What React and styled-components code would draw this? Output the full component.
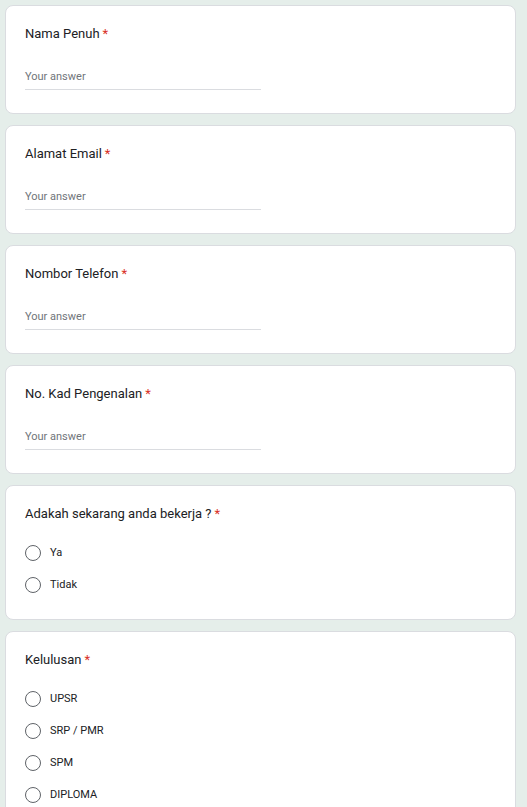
import React from 'react';
import styled, { createGlobalStyle } from 'styled-components';

const GlobalStyle = createGlobalStyle`
    html, body {
        margin: 0;
        padding: 0;
        background: #e5eeea;
        font-family: Roboto, "Liberation Sans", Arial, sans-serif;
        color: #202124;
    }
`;

const Page = styled.div`
    display: flex;
    flex-direction: column;
    gap: 11px;
    padding: 5px 11px 20px 5px;
`;

const Card = styled.div`
    background: #fff;
    border: 1px solid #dadce0;
    border-radius: 8px;
    padding: 19px 19px ${props => (props.choice ? '18px' : '23px')};
    display: flex;
    flex-direction: column;
`;

const Question = styled.div`
    font-size: 13px;
    line-height: 18px;
    color: #202124;
`;

const Required = styled.span`
    color: #d93025;
    margin-left: 3px;
`;

const AnswerField = styled.div`
    width: 50%;
    margin-top: 26px;
    padding-bottom: 4px;
    border-bottom: 1px solid #dadce0;
    font-size: 11px;
    line-height: 16px;
    color: #70757a;
`;

const Options = styled.div`
    margin-top: 14px;
    display: flex;
    flex-direction: column;
`;

const OptionRow = styled.label`
    display: flex;
    align-items: center;
    height: 32px;
    gap: 9px;
    cursor: pointer;
`;

const Radio = styled.span`
    width: 16px;
    height: 16px;
    box-sizing: border-box;
    border: 1.5px solid #5f6368;
    border-radius: 50%;
    flex-shrink: 0;
`;

const OptionLabel = styled.span`
    font-size: 11px;
    line-height: 16px;
    color: #202124;
`;

const textQuestions = ['Nama Penuh', 'Alamat Email', 'Nombor Telefon', 'No. Kad Pengenalan'];

const choiceQuestions = [
    { title: 'Adakah sekarang anda bekerja ?', options: ['Ya', 'Tidak'] },
    { title: 'Kelulusan', options: ['UPSR', 'SRP / PMR', 'SPM', 'DIPLOMA', 'IJAZAH', 'Lain-lain'] },
];

const App = () => {
    return (
        <>
            <GlobalStyle />
            <Page>
                {textQuestions.map(q => (
                    <Card key={q}>
                        <Question>{q}<Required>*</Required></Question>
                        <AnswerField>Your answer</AnswerField>
                    </Card>
                ))}
                {choiceQuestions.map(q => (
                    <Card key={q.title} choice>
                        <Question>{q.title}<Required>*</Required></Question>
                        <Options>
                            {q.options.map(opt => (
                                <OptionRow key={opt}>
                                    <Radio />
                                    <OptionLabel>{opt}</OptionLabel>
                                </OptionRow>
                            ))}
                        </Options>
                    </Card>
                ))}
            </Page>
        </>
    );
};

export default App;
